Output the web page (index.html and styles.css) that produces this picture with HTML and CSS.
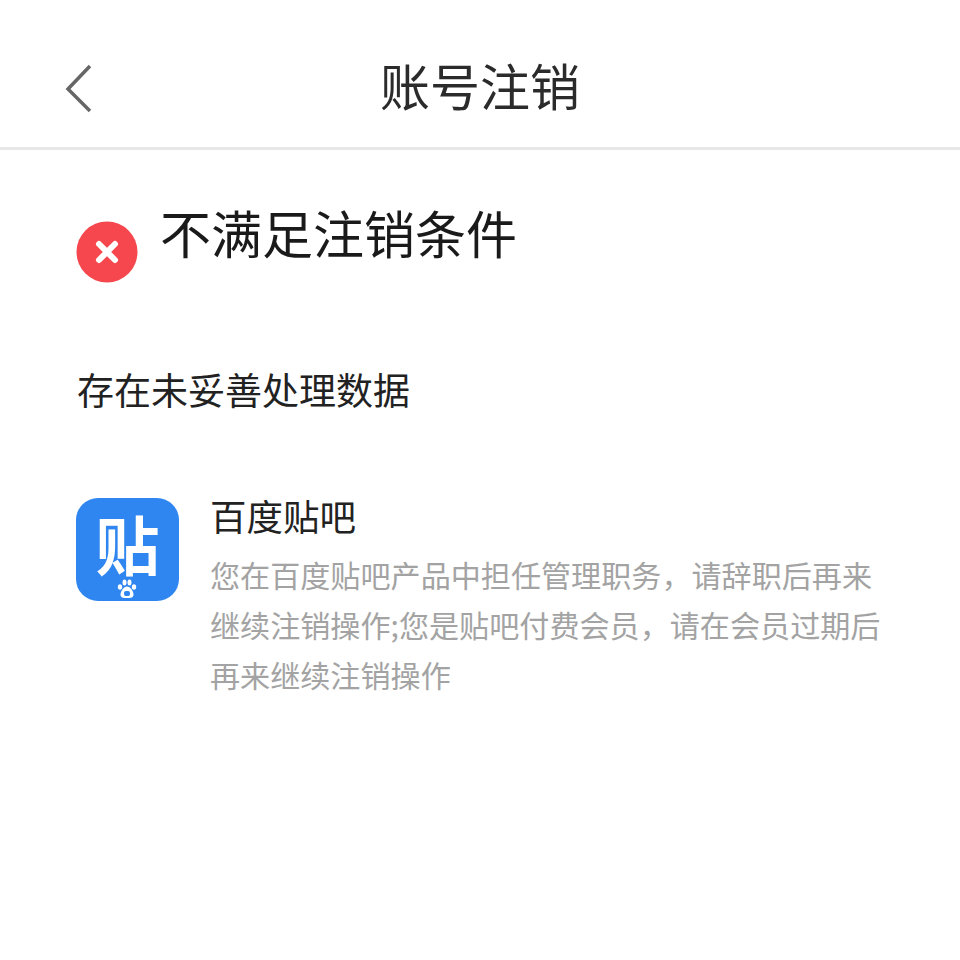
FILE: index.html
```html
<!DOCTYPE html>
<html>
<head>
    <title>账号注销</title>
    <meta charset="UTF-8">
    <meta name="viewport" content="width=device-width, initial-scale=1.0">
    <link rel="stylesheet" href="styles.css">
</head>
<body>
    <div class="top-bar">
        <svg class="back-icon" width="30" height="50" viewBox="0 0 30 50">
            <path d="M25 2 L3 25 L25 47" fill="none" stroke="#666" stroke-width="3.5"/>
        </svg>
        <h1>账号注销</h1>
    </div>

    <div class="content">
        <div class="status-row">
            <svg class="error-icon" width="62" height="62" viewBox="0 0 62 62">
                <circle cx="31" cy="31" r="30.5" fill="#f5474d"/>
                <path d="M23 23 L39 39 M39 23 L23 39" stroke="#fff" stroke-width="6" stroke-linecap="round"/>
            </svg>
            <h2>不满足注销条件</h2>
        </div>

        <p class="reason">存在未妥善处理数据</p>

        <div class="product-row">
            <div class="app-icon">
                <span class="app-char">贴</span>
                <svg class="paw" width="20" height="20" viewBox="0 0 20 20">
                    <ellipse cx="3" cy="8" rx="2.2" ry="2.8" fill="#fff"/>
                    <ellipse cx="7.5" cy="3.5" rx="2" ry="3" fill="#fff"/>
                    <ellipse cx="12.5" cy="3.5" rx="2" ry="3" fill="#fff"/>
                    <ellipse cx="17" cy="8" rx="2.2" ry="2.8" fill="#fff"/>
                    <path d="M10 7.5 C13 7.5 16.5 12 16.5 15.5 C16.5 18.5 14 19 10 19 C6 19 3.500 18.500 3.500 15.500 C3.500 12 7 7.500 10 7.500Z" fill="#fff"/>
                    <rect x="7" y="12" width="6" height="5" rx="2" fill="#2f86f0"/>
                </svg>
            </div>
            <div class="product-info">
                <div class="product-name">百度贴吧</div>
                <div class="product-desc">您在百度贴吧产品中担任管理职务，请辞职后再来继续注销操作;您是贴吧付费会员，请在会员过期后再来继续注销操作</div>
            </div>
        </div>
    </div>
</body>
</html>
```

FILE: styles.css
```css
body {
    margin: 0;
    background: #fff;
    font-family: "Noto Sans CJK SC", "Liberation Sans", sans-serif;
}
.top-bar {
    position: relative;
    height: 147px;
    border-bottom: 3px solid #e8e8e8;
    display: flex;
    align-items: center;
    justify-content: center;
}
.top-bar h1 {
    margin: 21px 0 0;
    font-size: 50px;
    font-weight: 400;
    color: #2b2b2b;
    line-height: 60px;
}
.back-icon {
    position: absolute;
    left: 65px;
    top: 64px;
}
.content {
    padding: 56px 0 0 76px;
}
.status-row {
    display: flex;
    align-items: flex-start;
    gap: 24px;
}
.error-icon {
    margin-top: 15px;
}
.status-row h2 {
    margin: -4px 0 0 -2px;
    font-size: 51px;
    font-weight: 400;
    color: #1a1a1a;
    line-height: 60px;
}
.reason {
    margin: 81px 0 0 1px;
    font-size: 37px;
    line-height: 50px;
    color: #222;
}
.product-row {
    display: flex;
    align-items: flex-start;
    gap: 32px;
    margin-top: 84px;
}
.app-icon {
    position: relative;
    width: 103px;
    height: 103px;
    flex: none;
    border-radius: 22px;
    background: #2f86f0;
    text-align: center;
}
.app-char {
    display: block;
    color: #fff;
    font-size: 64px;
    font-weight: 700;
    line-height: 88px;
}
.paw {
    position: absolute;
    left: 41px;
    top: 81px;
}
.product-info {
    width: 680px;
    margin-left: -1px;
}
.product-name {
    margin-top: -2px;
    font-size: 36.5px;
    line-height: 40px;
    color: #222;
}
.product-desc {
    margin-top: 13px;
    font-size: 30.1px;
    line-height: 50px;
    color: #a3a3a3;
}
```
